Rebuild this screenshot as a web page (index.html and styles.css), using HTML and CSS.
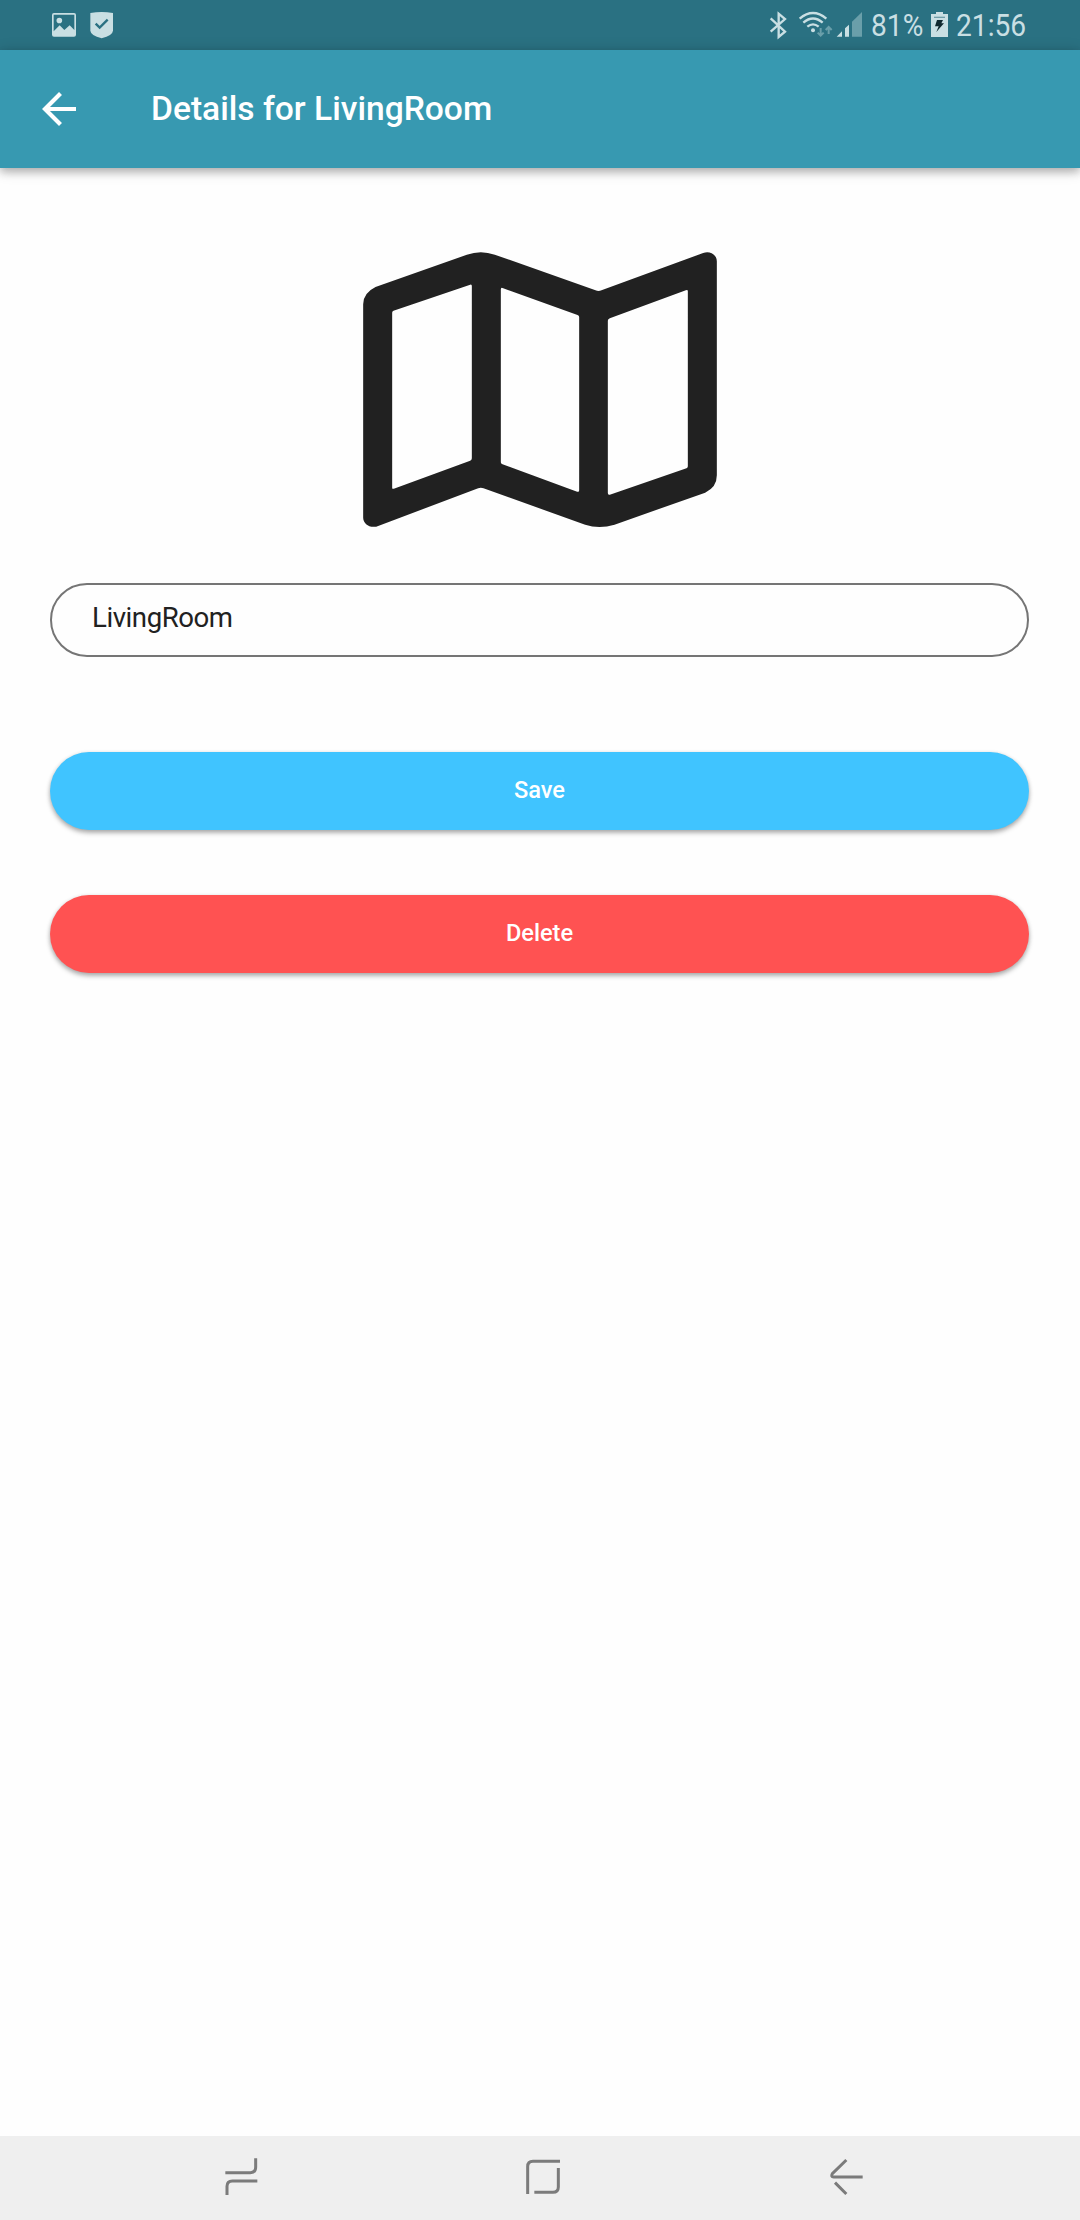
FILE: index.html
```html
<!DOCTYPE html>
<html lang="en">
<head>
<meta charset="utf-8">
<title>Details for LivingRoom</title>
<link rel="stylesheet" href="styles.css">
</head>
<body>
<div class="screen">
  <div class="status">
    <svg class="i-image" viewBox="60 0 84 150"><path fill="currentColor" fill-rule="evenodd" d="M72 39H132Q138 39 138 45V104Q138 110 132 110H72Q66 110 66 104V45Q66 39 72 39ZM71 44V94L89 76L103 90L119 76L133 90V44ZM88 53A8 8 0 1 1 88 70A8 8 0 1 1 88 53Z"/></svg>
    <svg class="i-shield" viewBox="174 0 84 150"><path fill="currentColor" d="M181 39Q215 33 249 39V92Q248 106 215 115Q182 106 181 92Z"/><path class="check" d="M197 71L209 83L233 59"/></svg>
    <div class="status-right">
      <svg class="i-bt" viewBox="54 0 60 150"><path fill="none" stroke="currentColor" stroke-width="7" d="M62 55L105 95L86 111V41L105 57L62 95"/></svg>
      <svg class="i-wifi" viewBox="144 0 108 150"><g fill="none" stroke="currentColor" stroke-width="7"><path d="M149 56Q189 22 229 56"/><path d="M160 68Q189 43 218 68"/><path d="M172 80Q189 66 206 80"/></g><circle cx="189" cy="91" r="6" fill="currentColor"/><path class="dim-line" d="M212 84V108M203 98L212 107L221 98M236 102V80M227 90L236 81L245 90"/></svg>
      <svg class="i-signal" viewBox="258 0 84 150"><path fill="currentColor" d="M260 110L276 94V110ZM285 85L297 74V110H285Z"/><path class="dim" d="M306 65L336 36V110H306Z"/></svg>
      <span class="pct"><span>81%</span></span>
      <svg class="i-bat" viewBox="210 0 60 150"><path fill="currentColor" d="M228 36H249V42H264V111H213V42H228Z"/><path fill="#6f9da8" d="M222 50H255V54H222Z"/><path fill="#10292f" d="M231 60H249L244 70H252L229 96L236 79H225Z"/></svg>
      <span class="time"><span>21:56</span></span>
    </div>
  </div>
  <header class="appbar">
    <svg class="back" viewBox="0 0 34 34"><path d="M34 17H3M18.500 1.500L3 17L18.500 32.500"/></svg>
    <h1>Details for LivingRoom</h1>
  </header>
  <main>
    <svg class="map" viewBox="67 66 1061 825"><path fill="#212121" fill-rule="evenodd" d="M104 171L378 74Q420 59 462 74L764 181Q773 185 782 181L1087 69C1107 61 1128 74 1128 94V736Q1128 772 1093 788L821 884Q775 898 733 884L428 775Q420 771 412 775L114 887C90 898 67 882 67 863V223Q67 189 104 171ZM158 242Q154 244 154 248V773Q154 778 159 776L388 692Q393 690 393 685V168Q393 162 388 164ZM485 174Q480 172 480 178V697Q480 701 485 703L709 785Q715 787 715 781V261Q715 257 710 255ZM807 265Q801 267 801 272V789Q801 796 807 794L1037 715Q1041 713 1041 709V184Q1041 178 1035 181Z"/></svg>
    <input class="field" type="text" value="LivingRoom" aria-label="Room name">
    <button class="btn save">Save</button>
    <button class="btn delete">Delete</button>
  </main>
  <nav>
    <svg viewBox="0 48 300 252"><path d="M76 158H151Q167 158 167 142V115M81 225V199Q81 183 97 183H172"/></svg>
    <svg viewBox="0 48 300 252"><path d="M83 222V140Q83 124 99 124H180M175 144V201Q175 217 159 217H103"/></svg>
    <svg viewBox="0 48 300 252"><path d="M139 120L97 161Q92 171 101 171H188M105 188L139 222"/></svg>
  </nav>
</div>
</body>
</html>
```
FILE: styles.css
```css
* { box-sizing: border-box; }
body { margin: 0; font-family: Roboto, "Noto Sans", sans-serif; background: #fefefe; }
svg { display: block; flex: none; }
.screen { width: 1080px; height: 2220px; display: flex; flex-direction: column; }

.status { height: 50px; flex: none; padding: 0 54px 0 50px; display: flex; align-items: center; gap: 10px; background: #2a7182; color: #c9dfe3; }
.status svg { height: 50px; }
.i-image, .i-shield, .i-signal { width: 28px; }
.check { fill: none; stroke: #2a7182; stroke-width: 7; }
.status-right { margin-left: auto; display: flex; align-items: center; }
.i-bt, .i-bat { width: 20px; }
.i-wifi { width: 36px; margin: 0 2px 0 10px; }
.dim { fill: #6a9faa; }
.dim-line { fill: none; stroke: #6a9faa; stroke-width: 6; }
.pct, .time { font-size: 32px; line-height: 50px; white-space: nowrap; }
.pct { width: 52px; margin: 0 7px; }
.time { width: 70px; margin-left: 6px; }
.pct span, .time span { display: inline-block; transform: scaleX(.88); transform-origin: left; }

.appbar { height: 118px; flex: none; padding-left: 42px; display: flex; align-items: center; gap: 75px; background: #3799b1; color: #fff; box-shadow: 0 4px 8px rgba(0, 0, 0, .2), 0 2px 14px rgba(0, 0, 0, .2); }
.back { width: 34px; height: 34px; }
.back path { fill: none; stroke: #fff; stroke-width: 4.200; }
h1 { margin: 0; font-size: 33.600px; font-weight: 500; line-height: 40px; }

main { flex: 1; padding: 84px 51px 0 50px; display: flex; flex-direction: column; }
.map { width: 354px; height: 275px; align-self: center; }
.field { width: 100%; height: 74px; margin-top: 56px; padding: 0 40px 5px; border: 2px solid #757575; border-radius: 37px; background: transparent; color: #212121; font: 400 27.600px Roboto, sans-serif; letter-spacing: -.45px; }
.btn { height: 78px; border: 0; border-radius: 39px; color: #fff; font: 500 23.600px Roboto, sans-serif; padding: 0 0 2px; box-shadow: 0 3px 5px rgba(0, 0, 0, .28), 0 1px 4px rgba(0, 0, 0, .12); }
.save { margin-top: 95px; background: #40c4ff; }
.delete { margin-top: 65px; background: #ff5252; }

nav { height: 84px; flex: none; padding: 0 200px; display: flex; gap: 200px; background: #efefef; }
nav svg { width: 100px; height: 84px; }
nav path { fill: none; stroke: #7b7b7b; stroke-width: 9; }
```
